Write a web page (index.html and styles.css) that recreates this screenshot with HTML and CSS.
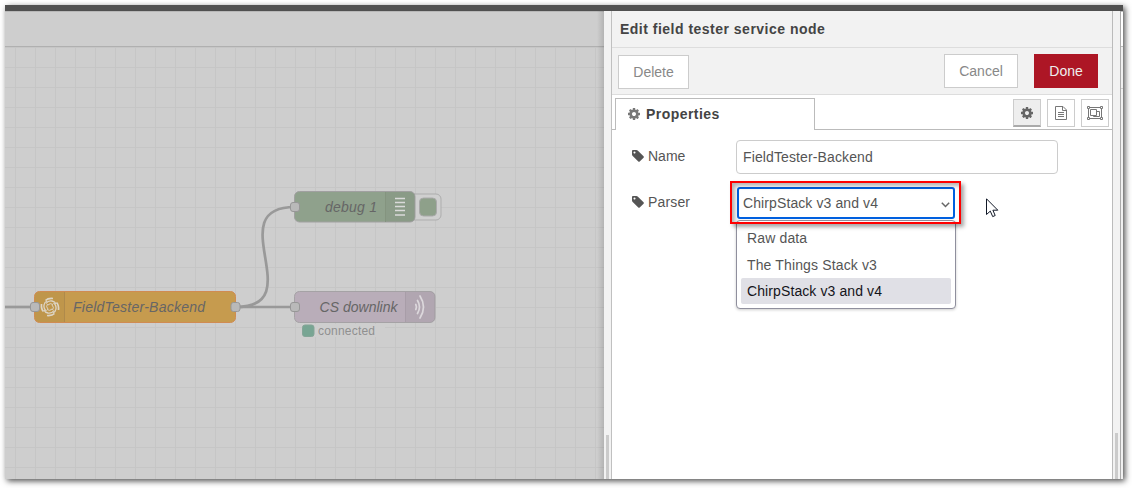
FILE: index.html
```html
<!DOCTYPE html>
<html lang="en">
<head>
<meta charset="utf-8">
<title>Edit field tester service node</title>
<link rel="stylesheet" href="styles.css">
</head>
<body>
<svg class="defs" width="0" height="0">
  <defs>
    <symbol id="gear" viewBox="0 0 1536 1536"><path d="M1024 768q0-106-75-181t-181-75-181 75-75 181 75 181 181 75 181-75 75-181zm512-109v222q0 12-8 23t-20 13l-185 28q-19 54-39 91 35 50 107 138 10 12 10 25t-9 23q-27 37-99 108t-94 71q-12 0-26-9l-138-108q-44 23-91 38-16 136-29 186-7 28-36 28H657q-14 0-24.500-8.500T621 1506l-28-184q-49-16-90-37l-141 107q-10 9-25 9-14 0-25-11-126-114-165-168-7-10-7-23 0-12 8-23 15-21 51-66.500t54-70.500q-27-50-41-99L29 913q-13-2-21-12.500T0 877V655q0-12 8-23t19-13l186-28q14-46 39-92-40-57-107-138-10-12-10-24 0-10 9-23 26-36 98.500-107.500T337 135q13 0 26 10l138 107q44-23 91-38 16-136 29-186 7-28 36-28h222q14 0 24.500 8.500T915 30l28 184q49 16 90 37l142-107q9-9 24-9 13 0 25 10 129 119 165 170 7 8 7 22 0 12-8 23-15 21-51 66.500t-54 70.500q26 50 41 98l183 28q13 2 21 12.500t8 23.500z" fill="currentColor"/></symbol>
    <symbol id="tag" viewBox="0 0 1536 1536"><path d="M448 320q0-53-37.500-90.500T320 192t-90.500 37.500T192 320t37.500 90.500T320 448t90.500-37.500T448 320zm1067 576q0 53-37 90l-491 492q-39 37-91 37-53 0-90-37L91 762q-38-37-64.500-101T0 544V128q0-52 38-90t90-38h416q53 0 117 26.500T763 91l715 714q37 39 37 91z" fill="currentColor"/></symbol>
  </defs>
</svg>
<div class="window">
  <div class="topbar"></div>
  <div class="main">
    <div class="workspace">
      <div class="tabstrip"></div>
      <svg class="flow" width="599" height="432" viewBox="5 47 599 432">
        <defs>
          <pattern id="grid" x="15" y="47" width="20" height="20" patternUnits="userSpaceOnUse"><path d="M.5 0V20M0 .5H20" stroke="#c6c6c6"/></pattern>
        </defs>
        <rect x="5" y="47" width="599" height="432" fill="url(#grid)"/>
        <g class="wires">
          <path d="M5 307H35"/>
          <path d="M236 307H295"/>
          <path d="M236 307C311 307 219 207 295 207"/>
        </g>
        <rect class="node" x="34.500" y="291.500" width="201" height="31" rx="5" fill="#c69b4e" stroke="#d08b52"/>
        <path d="M35 297q0-5 5-5h24.500v30H40q-5 0-5-5z" fill="#000" fill-opacity=".03"/>
        <path d="M64.500 292V322" stroke="#af8a4b"/>
        <g transform="translate(50 307)" fill="none" stroke="#ddd5c6">
          <g id="swirl">
            <path d="M-4.500-6.500Q-2-9 3-8.500" stroke-width="1.700"/>
            <path d="M-4-3.500Q-2-6.500 2-6Q5-5.500 6-3" stroke-width="1.300"/>
            <path d="M-2-2Q0-4.500 3-2.500" stroke-width="1"/>
          </g>
          <use href="#swirl" transform="rotate(90)"/>
          <use href="#swirl" transform="rotate(180)"/>
          <use href="#swirl" transform="rotate(270)"/>
        </g>
        <text class="label" x="73" y="312" textLength="132">FieldTester-Backend</text>

        <rect x="405.500" y="194" width="35.500" height="26" rx="5" fill="#cfcfcf" stroke="#adadad"/>
        <rect x="419.500" y="198" width="17" height="18" rx="4" fill="#8ea08a" stroke="#aaa"/>
        <rect class="node" x="294.500" y="191.500" width="120.500" height="30.500" rx="5" fill="#8fa18c" stroke="#a0a0a0"/>
        <path d="M385.500 192H410q5 0 5 5v20q0 5-5 5h-24.500z" fill="#000" fill-opacity=".03"/>
        <path d="M385.500 192V222" stroke="#84947f"/>
        <path d="M395 198.500h10M395 202.500h10M395 206.500h10M395 210.500h10M395 215h10" stroke="#dadada" stroke-width="1.300"/>
        <text class="label" x="325" y="212" textLength="52">debug 1</text>

        <rect class="node" x="294.500" y="291.500" width="140.500" height="31" rx="5" fill="#b9adb9" stroke="#a5a2a5"/>
        <path d="M405.500 292H430q5 0 5 5v20q0 5-5 5h-24.500z" fill="#000" fill-opacity=".04"/>
        <path d="M405.500 292V322" stroke="#a89da8"/>
        <g fill="none" stroke="#dcd8dc" stroke-width="1.700" stroke-linecap="round">
          <path d="M415.800 304.500q1.300 2.500 0 5"/><path d="M417.500 300.500q4 6.500 0 13"/><path d="M420 296q7 11 0 22"/>
        </g>
        <text class="label" x="319.500" y="312" textLength="78">CS downlink</text>
        <g fill="#b9b9b9" stroke="#979797">
          <rect x="30.500" y="302.500" width="9" height="9" rx="2.500"/>
          <rect x="231" y="302.500" width="9" height="9" rx="2.500"/>
          <rect x="290.500" y="302.500" width="9" height="9" rx="2.500"/>
          <rect x="290.500" y="202.500" width="9" height="9" rx="2.500"/>
        </g>
        <rect x="302" y="324" width="83" height="13" fill="#cecece"/>
        <rect x="302.500" y="325" width="11.500" height="11.500" rx="2.500" fill="#78a593" stroke="#84a597"/>
        <text class="status" x="318" y="335" textLength="57">connected</text>
      </svg>
    </div>
    <div class="separator"><i class="grip grip-left"></i></div>
    <div class="tray">
      <header class="title">Edit field tester service node</header>
      <div class="toolbar">
        <button class="btn delete">Delete</button>
        <button class="btn cancel">Cancel</button>
        <button class="btn done">Done</button>
      </div>
      <div class="tabs">
        <div class="tab"><svg width="12" height="12"><use href="#gear"/></svg>Properties</div>
        <div class="tab-rest">
          <span class="icon-btn active"><svg width="12" height="12"><use href="#gear"/></svg></span>
          <span class="icon-btn"><svg width="12" height="14" viewBox="0 0 12 14" fill="none" stroke="currentColor"><path d="M.5.500H8L11.500 4V13.500H.5zM7.500.500V4.500H11.500M3 6.500H9M3 8.500H9M3 10.500H9"/></svg></span>
          <span class="icon-btn"><svg width="16" height="14" viewBox="0 0 16 14" fill="none" stroke="currentColor"><path d="M2 1.500H14M2 12.500H14M1.500 2V12M14.500 2V12"/><path d="M3.500 3.500H9.500V9.500H3.500zM9.500 5.500H12.500V10.500H6.500V9.500"/><g fill="#fff"><path d="M.5.500h2v2h-2zM13.500.500h2v2h-2zM.5 11.500h2v2h-2zM13.500 11.500h2v2h-2z"/></g></svg></span>
        </div>
      </div>
      <div class="form">
        <div class="row">
          <label><svg width="12" height="12"><use href="#tag"/></svg>Name</label>
          <div class="input">FieldTester-Backend</div>
        </div>
        <div class="row parser">
          <label><svg width="12" height="12"><use href="#tag"/></svg>Parser</label>
          <div class="select-wrap">
            <div class="select"><span>ChirpStack v3 and v4</span><svg width="9" height="6" viewBox="0 0 9 6"><path d="M.8.800 4.500 4.500 8.200.800" fill="none" stroke="#666" stroke-width="1.500"/></svg></div>
            <div class="menu">
              <div class="option raw">Raw data</div>
              <div class="option tts">The Things Stack v3</div>
              <div class="option selected">ChirpStack v3 and v4</div>
            </div>
            <div class="highlight"></div>
          </div>
        </div>
      </div>
    </div>
    <div class="separator right"><i class="grip grip-right"></i></div>
    <div class="sidebar"><div class="side-head"></div><div class="side-tools"></div></div>
  </div>
</div>
<svg class="cursor" width="13" height="20" viewBox="0 0 13 20"><path d="M.5.800V16.500L4.300 13.100 6.700 18.600 9.200 17.500 6.900 12.200H11.800z" fill="#fff" stroke="#111827" stroke-width="1"/></svg>
</body>
</html>
```
FILE: styles.css
```css
* { box-sizing: border-box; }
body {
  margin: 0;
  width: 1132px;
  height: 488px;
  overflow: hidden;
  padding: 5px;
  background: #fff;
  font: 14px/20px "Liberation Sans", Arial, sans-serif;
  color: #555;
}
svg { display: block; flex: none; }
.defs { position: absolute; }
.window {
  width: 1118px;
  height: 474px;
  display: flex;
  flex-direction: column;
  background: #fff;
  box-shadow: 2px 2px 6px rgba(0, 0, 0, .7);
}
.topbar { height: 6px; background: #505050; }
.main { flex: 1; display: flex; }
.workspace {
  width: 599px;
  overflow: hidden;
  background: #cecece;
  position: relative;
}
.workspace::after {
  content: "";
  position: absolute;
  right: 0;
  top: 0;
  bottom: 0;
  width: 7px;
  background: linear-gradient(to right, rgba(0, 0, 0, 0), rgba(0, 0, 0, .13));
}
.tabstrip { height: 36px; border-top: 1px solid #b8b8b8; border-bottom: 1px solid #b0b0b0; }
.wires { fill: none; stroke: #999; stroke-width: 2.7; }
.label { font-size: 14px; font-style: italic; fill: #666; }
.status { font-size: 12px; fill: #909090; }
.separator { width: 7px; background: #f2f2f2; display: flex; align-items: flex-end; }
.grip { width: 3px; background: #cbcbcb; margin-left: 2px; }
.grip-left { height: 44px; }
.grip-right { height: 46px; }
.tray {
  width: 502px;
  border-left: 1px solid #c0c0c0;
  border-right: 1px solid #bbb;
  background: #fff;
}
.title {
  height: 37px;
  background: #f2f2f2;
  border-bottom: 1px solid #ddd;
  padding: 8px 0 0 8px;
  font-weight: bold;
  color: #444;
  letter-spacing: .49px;
}
.toolbar {
  height: 47px;
  background: #f2f2f2;
  border-bottom: 1px solid #ddd;
  display: flex;
  align-items: flex-start;
  padding: 6px 14px 0 6px;
}
.btn {
  height: 34px;
  margin: 0;
  padding: 0;
  font: inherit;
  color: #888;
  background: #fff;
  border: 1px solid #ccc;
  border-radius: 0;
}
.delete { width: 71px; margin-top: 1px; }
.cancel { width: 74px; margin-left: auto; }
.done { width: 64px; margin-left: 16px; background: #ad1625; border-color: #ad1625; color: #eee; }
.tabs { height: 35px; display: flex; padding-top: 3px; }
.tabs::before { content: ""; width: 3px; border-bottom: 1px solid #bbb; }
.tab {
  width: 200px;
  border: 1px solid #bbb;
  border-bottom: 0;
  display: flex;
  align-items: center;
  gap: 6px;
  padding: 0 0 1px 12px;
  font-weight: bold;
  color: #444;
  letter-spacing: .45px;
}
.tab svg { color: #777; }
.tab-rest {
  flex: 1;
  border-bottom: 1px solid #bbb;
  display: flex;
  justify-content: flex-end;
  gap: 6px;
  padding: 1px 3px 0 0;
}
.icon-btn {
  width: 28px;
  height: 28px;
  border: 1px solid #ccc;
  display: flex;
  align-items: center;
  justify-content: center;
  color: #777;
}
.active { background: #eee; border-bottom: 2px solid #aaa; color: #666; }
.form { padding: 10px 0 0 20px; }
.row { display: flex; height: 47px; }
label { width: 104px; display: flex; gap: 4px; padding-top: 6px; height: 26px; }
label svg { margin-top: 4px; }
.input { width: 322px; height: 34px; border: 1px solid #ccc; border-radius: 4px; padding: 6px; letter-spacing: .12px; }
.parser label { padding-top: 5px; letter-spacing: .15px; }
.select-wrap { width: 220px; position: relative; }
.select {
  height: 32px;
  width: 218px;
  margin-left: 1px;
  border: 2px solid #0060df;
  border-radius: 3px;
  display: flex;
  align-items: center;
  justify-content: space-between;
  padding: 0 3px 0 4px;
  letter-spacing: .1px;
}
.select svg { margin-top: 3px; }
.menu {
  position: absolute;
  left: 0;
  top: 33px;
  width: 220px;
  height: 89px;
  border: 1px solid #8f8f9d;
  border-radius: 4px;
  background: #fff;
  padding: 4px;
  box-shadow: 0 1px 3px rgba(0, 0, 0, .2);
}
.option { height: 26px; line-height: 26px; padding-left: 6px; border-radius: 2px; letter-spacing: .14px; }
.tts { margin-top: 1px; }
.selected { background: #e0e0e6; color: #15141a; letter-spacing: .1px; }
.highlight {
  position: absolute;
  left: -6px;
  top: -6px;
  width: 231px;
  height: 43px;
  border: 2px solid #f00;
  box-shadow: 3px 3px 4px rgba(0, 0, 0, .35), inset 3px 3px 4px rgba(0, 0, 0, .3);
}
.sidebar { width: 3px; border-left: 1px solid #aaa; background: #f0f0f0; }
.side-head { height: 36px; background: #fff; border-top: 1px solid #bbb; border-bottom: 1px solid #bbb; }
.side-tools { height: 42px; border-bottom: 1px solid #ccc; }
.cursor { position: absolute; left: 986px; top: 198px; }
```
